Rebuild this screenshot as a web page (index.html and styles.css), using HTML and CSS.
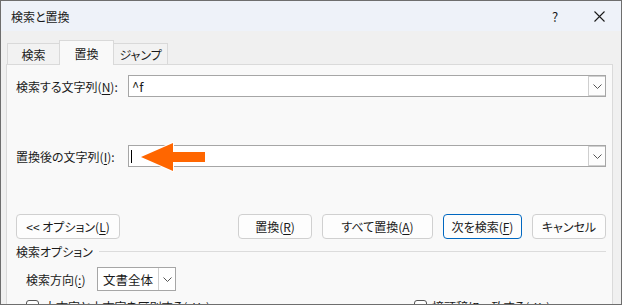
FILE: index.html
```html
<!DOCTYPE html>
<html lang="ja">
<head>
    <meta charset="UTF-8">
    <title>検索と置換</title>
    <link rel="stylesheet" href="styles.css">
</head>
<body>

<div class="dialog">
    <!-- タイトルバー -->
    <div class="titlebar">
        <span class="title">検索と置換</span>
        <span class="ctrl">?</span>
        <span class="ctrl">
            <svg width="11" height="11" viewBox="0 0 11 11"><path d="M0.5 0.5 L10.5 10.5 M10.5 0.5 L0.5 10.5" stroke="#1a1a1a" stroke-width="1.1" fill="none"/></svg>
        </span>
    </div>

    <div class="main">
        <!-- タブ -->
        <div class="tabs">
            <div class="tab tab-search">検索</div>
            <div class="tab tab-active">置換</div>
            <div class="tab tab-jump">ジャンプ</div>
        </div>

        <div class="panel">
            <div class="row">
                <label class="label">検索する文字列(<u>N</u>):</label>
                <div class="combo">
                    <span class="combo-text">^f</span>
                    <span class="drop"><svg width="9" height="5" viewBox="0 0 9 5"><path d="M0.5 0.5 L4.5 4.5 L8.5 0.5" stroke="#555" fill="none"/></svg></span>
                </div>
            </div>

            <div class="row row-replace">
                <label class="label">置換後の文字列(<u>I</u>):</label>
                <div class="combo combo-arrow">
                    <span class="caret"></span>
                    <span class="drop"><svg width="9" height="5" viewBox="0 0 9 5"><path d="M0.5 0.5 L4.5 4.5 L8.5 0.5" stroke="#555" fill="none"/></svg></span>
                    <!-- 注釈の矢印 -->
                    <svg class="arrow" width="68" height="31" viewBox="0 0 68 31">
                        <path d="M2 16 L34 2 L34 11 L66 11 L66 21 L34 21 L34 30 Z" fill="#ff6600" stroke="#fff" stroke-width="2" stroke-linejoin="round" paint-order="stroke"/>
                    </svg>
                </div>
            </div>

            <div class="buttons">
                <button class="btn btn-options">&lt;&lt; オプション(<u>L</u>)</button>
                <div class="spacer"></div>
                <button class="btn w74">置換(<u>R</u>)</button>
                <button class="btn w111">すべて置換(<u>A</u>)</button>
                <button class="btn btn-default">次を検索(<u>F</u>)</button>
                <button class="btn w74">キャンセル</button>
            </div>

            <div class="group">
                <span>検索オプション</span>
                <div class="group-line"></div>
            </div>

            <div class="direction">
                <label class="direction-label">検索方向(<u>:</u>)</label>
                <div class="select">
                    <span class="select-text">文書全体</span>
                    <span class="select-drop"><svg width="9" height="5" viewBox="0 0 9 5"><path d="M0.5 0.5 L4.5 4.5 L8.5 0.5" stroke="#555" fill="none"/></svg></span>
                </div>
            </div>

            <div class="checks">
                <div class="check check-left"><span class="box"></span>大文字と小文字を区別する(<u>H</u>)</div>
                <div class="check"><span class="box"></span>接頭辞に一致する(<u>X</u>)</div>
            </div>
        </div>
    </div>
</div>

</body>
</html>
```

FILE: styles.css
```css
body { margin: 0; font-family: "Noto Sans CJK JP", "Noto Sans", sans-serif; font-size: 12px; color: #1a1a1a; background: #fff; font-feature-settings: "palt"; }
u { text-decoration: underline; text-underline-offset: 2px; }

.dialog { width: 622px; height: 305px; box-sizing: border-box; border: 1px solid #6e6e6e; overflow: hidden; background: #f0f0f0; display: flex; flex-direction: column; }

.titlebar { height: 30px; flex: none; background: #eef2f9; display: flex; align-items: center; padding-left: 10px; }
.title { flex: 1; }
.ctrl { width: 44px; height: 30px; display: flex; align-items: center; justify-content: center; font-size: 13px; }

.main { flex: 1; padding: 8px 8px 0 5px; display: flex; flex-direction: column; }

.tabs { display: flex; align-items: flex-end; height: 25px; margin-left: 1px; }
.tab { box-sizing: border-box; height: 21px; border: 1px solid #d9d9d9; border-bottom: none; background: #f2f2f2; display: flex; align-items: center; justify-content: center; padding-top: 1px; }
.tab-search { width: 53px; }
.tab-active { width: 55px; height: 25px; margin-left: -1px; margin-bottom: -1px; background: #f9f9f9; position: relative; z-index: 1; }
.tab-jump { width: 55px; margin-left: -1px; }

.panel { flex: 1; border: 1px solid #dadada; background: #f9f9f9; padding: 10px 6px 0 9px; }

.row { display: flex; align-items: center; height: 22px; }
.row-replace { margin-top: 48px; }
.label { width: 112px; flex: none; }

.combo { flex: 1; height: 22px; box-sizing: border-box; border: 1px solid #a6a6a6; background: #fff; display: flex; align-items: center; padding-left: 3px; }
.combo-arrow { position: relative; }
.combo-text { flex: 1; font-size: 13px; }
.caret { width: 1px; height: 13px; background: #000; margin-left: -1px; }
.drop { margin-left: auto; width: 17px; height: 20px; box-sizing: border-box; border: 1px solid #cfcfcf; border-right: none; display: flex; align-items: center; justify-content: center; background: #fdfdfd; }
.arrow { position: absolute; left: 10px; top: -5px; }

.buttons { display: flex; gap: 10px; margin-top: 47px; }
.btn { height: 25px; box-sizing: border-box; border: 1px solid #d0d0d0; border-radius: 4px; background: #fdfdfd; font: inherit; color: #1a1a1a; padding: 0; }
.btn-options { width: 104px; }
.spacer { flex: 1; }
.w74 { width: 74px; }
.w111 { width: 111px; }
.btn-default { width: 79px; border-color: #0067c0; }

.group { display: flex; align-items: center; height: 14px; margin-top: 5px; }
.group-line { flex: 1; height: 1px; background: #dcdcdc; margin-left: 6px; }

.direction { display: flex; align-items: center; margin-top: 9px; padding-left: 10px; gap: 10px; }
.direction-label { width: 61px; flex: none; }
.select { width: 79px; height: 24px; box-sizing: border-box; border: 1px solid #a6a6a6; background: #fff; display: flex; align-items: center; }
.select-text { flex: 1; padding-left: 5px; font-size: 12.5px; }
.select-drop { width: 16px; height: 22px; border-left: 1px solid #cfcfcf; display: flex; align-items: center; justify-content: center; }

.checks { display: flex; margin-top: 7px; padding-left: 10px; }
.check { display: flex; align-items: center; gap: 5px; white-space: nowrap; }
.check-left { width: 388px; flex: none; }
.box { width: 11px; height: 11px; flex: none; border: 1px solid #555; border-radius: 3px; background: #fff; }
```
